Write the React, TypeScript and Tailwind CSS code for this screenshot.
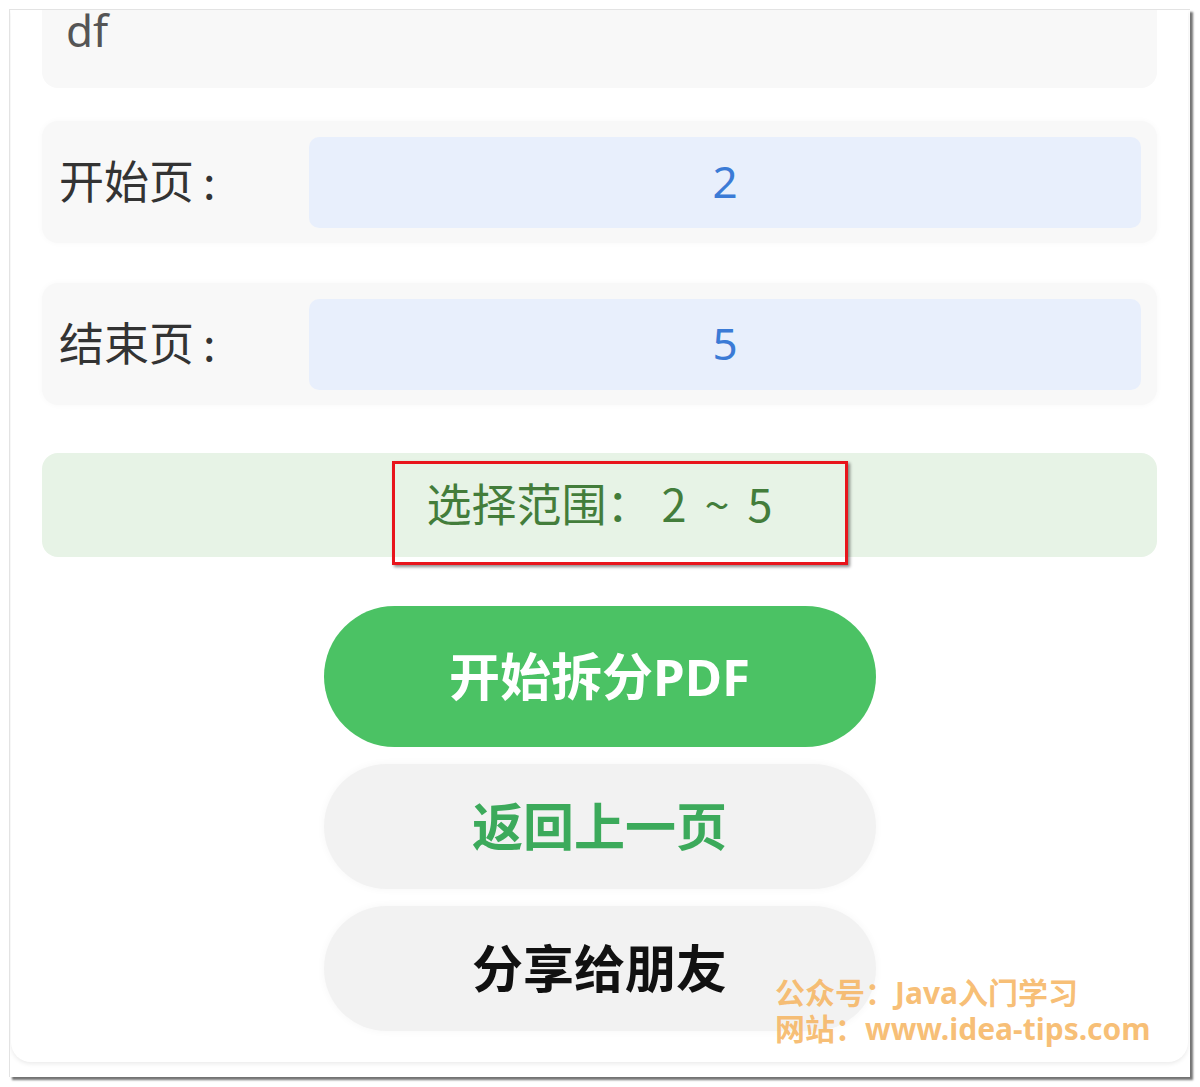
import React from "react";

const font = { fontFamily: '"Noto Sans", "Noto Sans CJK SC", sans-serif' };
const cjk = { fontFamily: '"Noto Sans CJK SC", "Noto Sans", sans-serif' };

function PageRow({ label, value }: { label: string; value: string }) {
  return (
    <div className="flex h-[122px] items-center rounded-[16px] bg-[#f8f8f8] pl-[17px] pr-[16px] shadow-[0_0_6px_rgba(0,0,0,0.03)]">
      <div className="w-[250px] pb-[5px] text-[45px] leading-none text-[#333]" style={cjk}>
        {label}
        <span className="ml-[9px]">:</span>
      </div>
      <div className="flex h-[91px] flex-1 items-center justify-center rounded-[10px] bg-[#e8effc] pb-[2px] text-[44px] text-[#3b7bd6]">
        {value}
      </div>
    </div>
  );
}

export default function App() {
  return (
    <div className="h-[1087px] w-[1200px] bg-white pl-[9px] pt-[9px]" style={font}>
      <div className="h-[1068px] w-[1181px] overflow-hidden border-l border-t border-[#e3e3e3] bg-white shadow-[3px_3px_2px_rgba(0,0,0,0.55)]">
        <div className="relative ml-[1px] mr-[2px] flex h-[1052px] flex-col rounded-b-[20px] bg-white px-[31px] shadow-[0_2px_4px_rgba(0,0,0,0.08)]">
          <div className="-mt-[14px] flex h-[92px] items-start rounded-b-[16px] bg-[#f8f8f8] pl-[24px] pt-[8px] text-[44px] leading-none text-[#555]">
            <span className="mt-[4px]">df</span>
          </div>

          <div className="mt-[33px]">
            <PageRow label="开始页" value="2" />
          </div>
          <div className="mt-[40px]">
            <PageRow label="结束页" value="5" />
          </div>

          <div
            className="relative mt-[48px] flex h-[104px] items-center justify-center rounded-[16px] bg-[#e7f3e6] pb-[5px] text-[45px] text-[#437d3b]"
            style={cjk}
          >
            <span>
              选择范围：<span className="ml-[10px] tracking-[4px]">2 ~ </span>5
            </span>
            <div className="pointer-events-none absolute left-[350px] top-[8px] h-[104px] w-[456px] border-[3px] border-[#e8141b] shadow-[2px_2px_3px_rgba(0,0,0,0.45)]" />
          </div>

          <div className="mt-[49px] flex flex-col items-center">
            <button className="flex h-[141px] w-[552px] items-center justify-center rounded-full bg-[#4bc264] text-[51px] font-bold text-white">
              开始拆分PDF
            </button>
            <button className="mt-[17px] flex h-[125px] w-[552px] items-center justify-center rounded-full bg-[#f2f2f2] text-[51px] font-bold text-[#3caa5b] shadow-[0_0_8px_rgba(0,0,0,0.04)]">
              返回上一页
            </button>
            <button className="mt-[17px] flex h-[125px] w-[552px] items-center justify-center rounded-full bg-[#f2f2f2] text-[51px] font-bold text-[#111] shadow-[0_0_8px_rgba(0,0,0,0.04)]">
              分享给朋友
            </button>
          </div>

          <div className="pointer-events-none absolute left-[764px] top-[965px] text-[30px] font-bold leading-[36px] text-[#f6b45e]/85">
            <div>公众号：Java入门学习</div>
            <div>网站：www.idea-tips.com</div>
          </div>
        </div>
      </div>
    </div>
  );
}
